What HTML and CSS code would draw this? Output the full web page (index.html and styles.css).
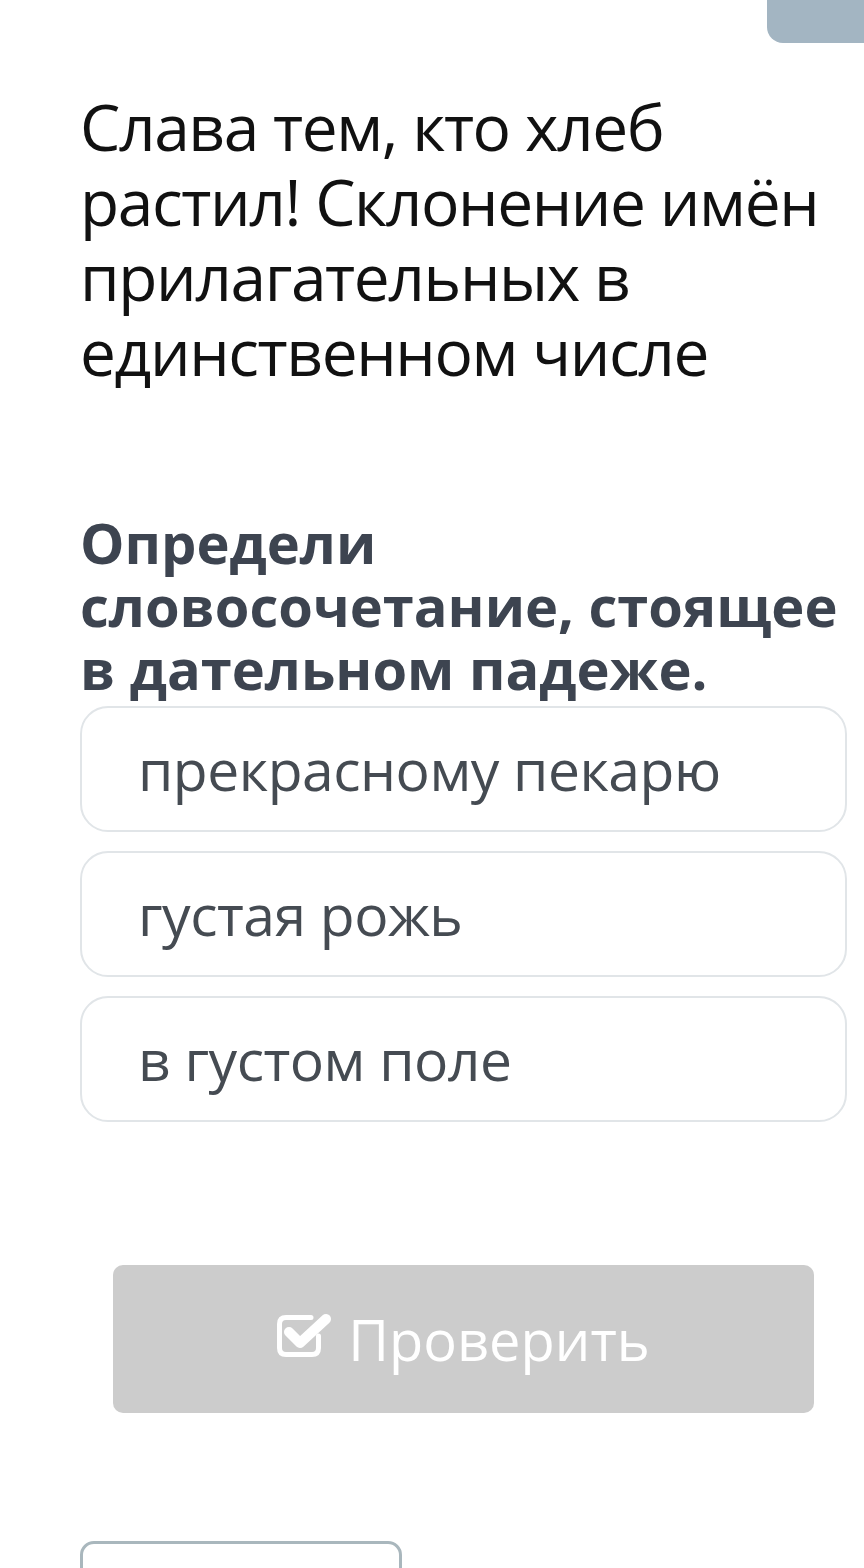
FILE: index.html
```html
<!DOCTYPE html>
<html lang="ru">
<head>
    <meta charset="UTF-8">
    <meta name="viewport" content="width=device-width, initial-scale=1.0">
    <title>Склонение имён прилагательных</title>
    <link rel="stylesheet" href="styles.css">
</head>
<body>
    <div class="top-tab"></div>

    <div class="page">
        <h1 class="lesson-title">Слава тем, кто хлеб растил! Склонение имён прилагательных в единственном числе</h1>

        <h2 class="question">Определи словосочетание, стоящее в дательном падеже.</h2>

        <div class="options">
            <div class="option">прекрасному пекарю</div>
            <div class="option">густая рожь</div>
            <div class="option">в густом поле</div>
        </div>

        <div class="actions">
            <button class="check-btn" type="button" disabled>
                <svg class="check-icon" viewBox="0 0 54 46" width="54" height="46">
                    <path d="M41.5 23 V35 Q41.5 41.5 35 41.5 H9 Q2.5 41.5 2.5 35 V11 Q2.5 4.5 9 4.5 H34" fill="none" stroke="#fff" stroke-width="5" stroke-linecap="round"/>
                    <path d="M12 19 L23 30 L49 6" fill="none" stroke="#fff" stroke-width="10" stroke-linecap="round" stroke-linejoin="round"/>
                </svg>
                <span>Проверить</span>
            </button>
        </div>

        <div class="next-box"></div>
    </div>
</body>
</html>
```

FILE: styles.css
```css
* {
    box-sizing: border-box;
    margin: 0;
    padding: 0;
}

body {
    background: #fff;
    font-family: 'Open Sans', 'Noto Sans', sans-serif;
    width: 864px;
    height: 1568px;
    overflow: hidden;
    position: relative;
}

.top-tab {
    position: absolute;
    top: 0;
    right: 0;
    width: 97px;
    height: 43px;
    background: #a3b5c2;
    border-bottom-left-radius: 16px;
}

.page {
    padding: 89px 17px 0 80px;
}

.lesson-title {
    font-weight: 400;
    font-size: 64px;
    line-height: 75px;
    color: #111;
    letter-spacing: -1.4px;
}

.question {
    margin-top: 122px;
    font-weight: 700;
    font-size: 56px;
    line-height: 63px;
    color: #3d4450;
}

.options {
    display: flex;
    flex-direction: column;
    gap: 19px;
    margin-top: 6px;
}

.option {
    height: 126px;
    border: 2px solid #e1e5e8;
    border-radius: 28px;
    padding-left: 56px;
    display: flex;
    align-items: center;
    font-size: 57px;
    color: #454b52;
    letter-spacing: -0.5px;
}

.actions {
    margin-top: 143px;
    padding: 0 33px;
}

.check-btn {
    width: 100%;
    height: 148px;
    border: none;
    border-radius: 10px;
    background: #cccccc;
    color: #fff;
    font-family: inherit;
    font-size: 56px;
    display: flex;
    align-items: center;
    justify-content: center;
    gap: 17px;
}

.check-icon {
    margin-top: -6px;
}

.next-box {
    margin-top: 128px;
    width: 322px;
    height: 80px;
    border: 3px solid #a9b7bd;
    border-radius: 14px;
}
```
